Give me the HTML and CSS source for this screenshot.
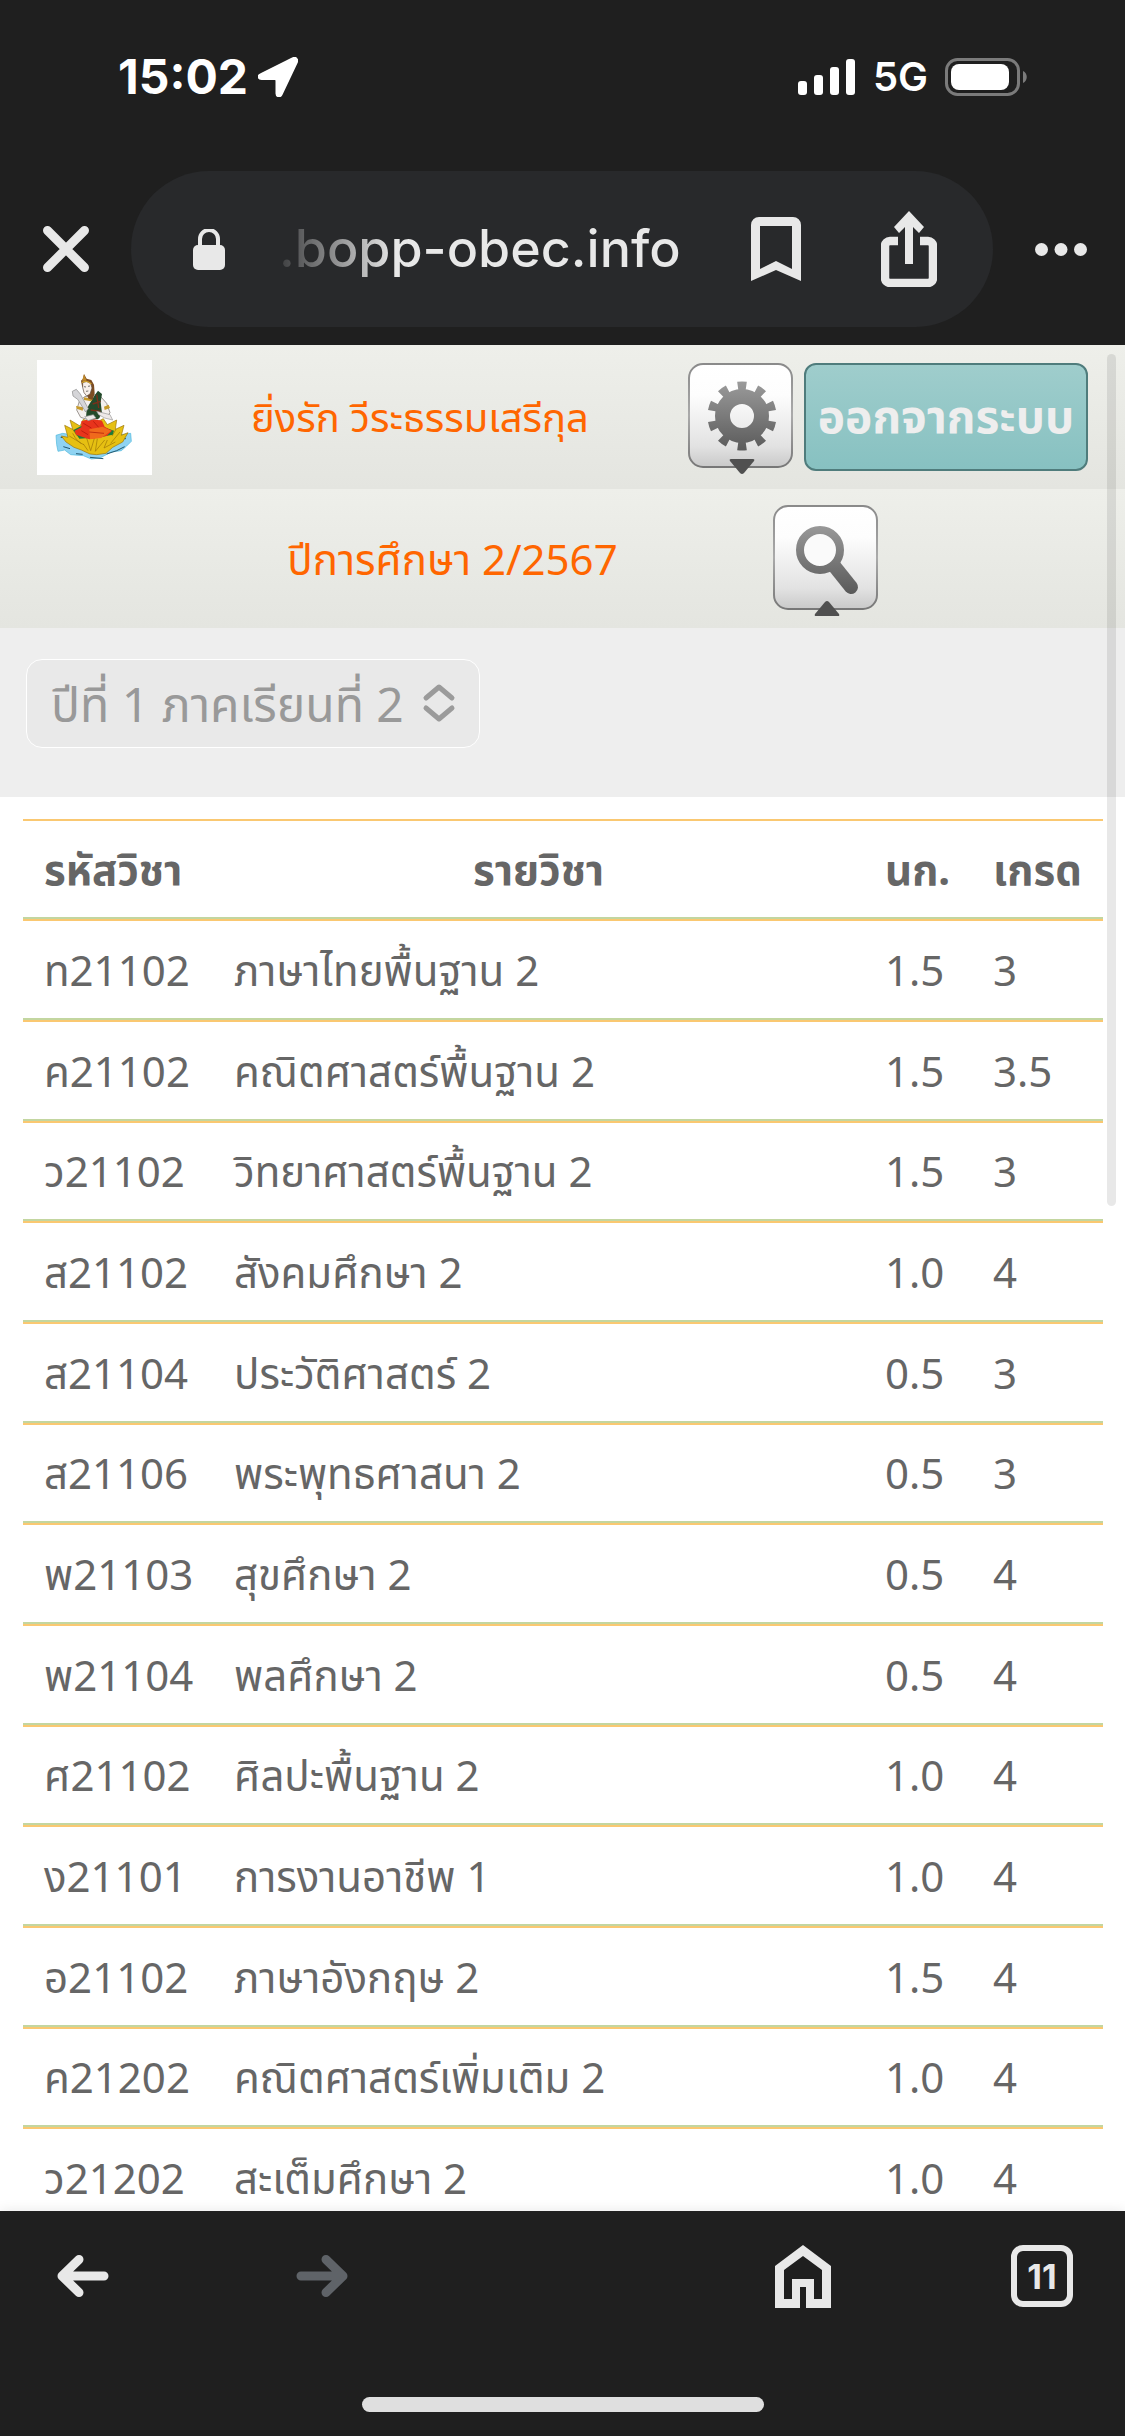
FILE: index.html
```html
<!DOCTYPE html>
<html lang="th">
<head>
    <meta charset="UTF-8">
    <meta name="viewport" content="width=device-width, initial-scale=1.0">
    <title>bopp-obec.info</title>
    <link rel="stylesheet" href="styles.css">
</head>
<body>

    <div class="status-bar">
        <div class="status-group">
            <span class="clock">15:02</span>
            <svg viewBox="0 0 40 40" width="40" height="40"><path d="M2.500 17.500 35 1.200c2.600-1.200 5 1 3.900 3.800L23.500 37.500c-1.400 2.900-5 2.200-5-1V23.500c0-1-.6-1.600-1.600-1.600H3.600c-3.400 0-4-3.100-1.100-4.400z" fill="#fff" stroke="#fff" stroke-width="2"/></svg>
        </div>
        <div class="status-group status-right">
            <svg viewBox="0 0 58 36" width="58" height="36" fill="#fff"><rect x="0" y="22" width="9" height="14" rx="3"/><rect x="16" y="16" width="9" height="20" rx="3"/><rect x="32" y="8" width="9" height="28" rx="3"/><rect x="48" y="0" width="9" height="36" rx="3"/></svg>
            <span class="network">5G</span>
            <svg viewBox="0 0 84 38" width="84" height="38"><rect x="1.500" y="1.500" width="72" height="35" rx="11" fill="none" stroke="#7b7b7b" stroke-width="3"/><rect x="6" y="6" width="58" height="26" rx="8" fill="#fff"/><path d="M78 13c5 2 5 10 0 12z" fill="#7b7b7b"/></svg>
        </div>
    </div>

    <div class="address-bar">
        <button class="icon-btn" aria-label="ปิด">
            <svg viewBox="0 0 46 46" width="46" height="46"><path d="M4.500 4.500l37 37M41.500 4.500l-37 37" stroke="#e8e8e8" stroke-width="9" stroke-linecap="round"/></svg>
        </button>
        <div class="url-box">
            <svg viewBox="0 0 32 41" width="32" height="41"><path d="M7 18v-8a9 9 0 0 1 18 0v8" fill="none" stroke="#e8e8e8" stroke-width="4"/><rect x="0" y="16" width="32" height="25" rx="5" fill="#e8e8e8"/></svg>
            <span class="url">.bopp-obec.info</span>
            <button class="icon-btn" aria-label="บุ๊กมาร์ก">
                <svg viewBox="0 0 50 64" width="50" height="64"><path d="M8 0h34a8 8 0 0 1 8 8v56L25 53 0 64V8a8 8 0 0 1 8-8zm1 9v43l16-8 16 8V9z" fill="#e8e8e8" fill-rule="evenodd"/></svg>
            </button>
            <button class="icon-btn" aria-label="แชร์">
                <svg viewBox="0 0 56 76" width="56" height="76"><path d="M17 30H9a5 5 0 0 0-5 5v32a5 5 0 0 0 5 5h38a5 5 0 0 0 5-5V35a5 5 0 0 0-5-5h-8" fill="none" stroke="#e8e8e8" stroke-width="8.500"/><path d="M28 0l15 16-5 6-6-6v37h-8V16l-6 6-5-6z" fill="#e8e8e8"/></svg>
            </button>
        </div>
        <button class="icon-btn" aria-label="เมนู">
            <svg viewBox="0 0 52 13" width="52" height="13" fill="#e8e8e8"><circle cx="6.500" cy="6.500" r="6.500"/><circle cx="26" cy="6.500" r="6.500"/><circle cx="45.500" cy="6.500" r="6.500"/></svg>
        </button>
    </div>

    <main>
        <div class="bar">
            <svg class="logo" viewBox="21 30 345 345" role="img" aria-label="ตราโรงเรียน">
                <!-- water -->
                <path d="M78 256l20-6 24 4 150 0 30-4 2 24-14 14-16 14-30 4-34 18-26 3-24-10-38-3-18-14-20 4-4-20z" fill="#8fd3f2" stroke="#4db8dc" stroke-width="2"/>
                <path d="M92 262l18 2M100 290l20 6M138 311l20 2M230 312l30-10 24-12M270 266l18 0M180 322l40 4" stroke="#22566e" stroke-width="3" fill="none"/>
                <!-- lotus -->
                <path d="M104 226l24 12-8-28 30 18 10-20 30 14 30-16 12 18 28-14-4 28 26-12-8 30 20-8-16 28-30 16-20 18-28 4-20-2-26-12-22-8-24-16-14-18 20 4z" fill="#e6c012" stroke="#9c7408" stroke-width="2"/>
                <path d="M118 258l36 22M128 250q14 28 34 34M170 264l12 38 12-40M202 266l-6 38 28-34M232 270l-10 24 34-18M160 282l14 20M270 246l-28 34M128 238l14 20M258 238l-12 20" stroke="#9c7408" stroke-width="2" fill="none"/>
                <path d="M130 240l28-14 60 4 34 12-4 12-40 8-60 4z" fill="#1f7a3a"/>
                <!-- seated figure -->
                <path d="M154 214l30-8 32 6 8 18 22 12-16 16-52 10-40-14-4-12 20-10z" fill="#e8341c"/>
                <path d="M178 238l40-8 26 12-30 22-34 4z" fill="#f06a1c"/>
                <path d="M160 220l24 14M190 214l16 18M178 246l44 4M154 242l20 12" stroke="#a81408" stroke-width="2" fill="none"/>
                <path d="M148 154l16-14 30-6 20 8 16 18 10 28-8 12-20-14-4 18-30 6-26-8-12-22z" fill="#f4f0ee" stroke="#6d645e" stroke-width="2"/>
                <path d="M176 166l18-30 10-14 12 10-4 24 4 34-12 18-36-4 2-26z" fill="#244a2b"/>
                <path d="M188 162l24-8M182 180l30 4M200 134l6 40" stroke="#7c2f1a" stroke-width="4"/>
                <path d="M138 168l22 4-2 10-18-6zM222 170l14-6 4 10-16 6zM162 142l26 4-4 8-22-4z" fill="#c79a2a"/>
                <path d="M156 108l-3-16 6-6 3-14 8 14 14 4 8 14 2 26-6 20-12-4z" fill="#7d4d22"/>
                <path d="M156 92l6-19 8 19z" fill="#c08a2c"/>
                <path d="M158 98q12-8 24 2l4 14-6 18-10 6-8-10-4-16z" fill="#f8efe9" stroke="#5c4a3e" stroke-width="2"/>
                <path d="M156 98q14-9 28 4" stroke="#d0a02c" stroke-width="4" fill="none"/>
                <path d="M162 110l6 1M174 109l6-1M168 124l7-1" stroke="#333" stroke-width="2"/>
                <path d="M127 124l12-6 12 14 24 44-8 10-24-38-14-10z" fill="#d5d5d8" stroke="#888" stroke-width="2"/>
                <path d="M164 200l26-6 8 10-24 8zM200 184l40 10 8 16-24-6-18-10z" fill="#eee9e8" stroke="#999" stroke-width="2"/>
            </svg>
            <span class="bar-title bar-name">ยิ่งรัก วีระธรรมเสรีกุล</span>
            <div class="bar-buttons">
                <button class="icon-btn" aria-label="ตั้งค่า">
                    <svg class="plate" viewBox="0 0 105 108" width="105" height="108">
                        <defs>
                            <linearGradient id="plate" x1="0" y1="0" x2="0" y2="1"><stop offset="0" stop-color="#fff"/><stop offset=".3" stop-color="#fdfdfd"/><stop offset=".8" stop-color="#e2e2e2"/><stop offset="1" stop-color="#c9c9c9"/></linearGradient>
                            <linearGradient id="metal" gradientUnits="userSpaceOnUse" x1="0" y1="18" x2="0" y2="90"><stop offset="0" stop-color="#9b9b9b"/><stop offset="1" stop-color="#585858"/></linearGradient>
                            <linearGradient id="edge" x1="0" y1="0" x2="0" y2="1"><stop offset="0" stop-color="#8a8a8a"/><stop offset=".5" stop-color="#aaa"/><stop offset="1" stop-color="#777"/></linearGradient>
                        </defs>
                        <rect x="1" y="1" width="103" height="103" rx="14" fill="url(#plate)" stroke="url(#edge)" stroke-width="2"/>
                        <circle cx="54" cy="53" r="19.500" fill="none" stroke="url(#metal)" stroke-width="15"/>
                        <circle cx="54" cy="53" r="30" fill="none" stroke="url(#metal)" stroke-width="9" pathLength="20" stroke-dasharray="0.900 1.100" stroke-dashoffset="1.450"/>
                        <path d="M43 96h22q2 0 1 2L56 110q-2 2-4 0L42 98q-1-2 1-2z" fill="#505050"/>
                    </svg>
                </button>
                <button class="logout">ออกจากระบบ</button>
            </div>
        </div>

        <div class="bar bar-year">
            <span class="bar-title">ปีการศึกษา 2/2567</span>
            <button class="icon-btn" aria-label="ค้นหา">
                <svg class="plate" viewBox="0 0 105 108" width="105" height="108">
                    <rect x="1" y="1" width="103" height="103" rx="14" fill="url(#plate)" stroke="url(#edge)" stroke-width="2"/>
                    <path d="M62 62l16 20" stroke="url(#metal)" stroke-width="14" stroke-linecap="round"/>
                    <circle cx="47" cy="45" r="20" fill="#fafafa" stroke="url(#metal)" stroke-width="8"/>
                    <path d="M43 111h22q2 0 1-2L56 97q-2-2-4 0L42 109q-1 2 1 2z" fill="#505050"/>
                </svg>
            </button>
        </div>

        <div class="filter">
            <div class="select-wrap">
                <select class="term" aria-label="ภาคเรียน" disabled>
                    <option>ปีที่ 1 ภาคเรียนที่ 2</option>
                </select>
                <svg class="chevrons" viewBox="0 0 34 40" width="34" height="40"><path d="M4 15L17 4l13 11M4 25l13 11 13-11" fill="none" stroke="#9b9b9b" stroke-width="5" stroke-linecap="round" stroke-linejoin="round"/></svg>
            </div>
        </div>

        <div class="grades-wrap">
            <table class="grades">
                <thead>
                    <tr><th class="col-code">รหัสวิชา</th><th class="col-name">รายวิชา</th><th class="col-credit">นก.</th><th class="col-grade">เกรด</th></tr>
                </thead>
                <tbody>
                    <tr><td>ท21102</td><td>ภาษาไทยพื้นฐาน 2</td><td>1.5</td><td>3</td></tr>
                    <tr><td>ค21102</td><td>คณิตศาสตร์พื้นฐาน 2</td><td>1.5</td><td>3.5</td></tr>
                    <tr><td>ว21102</td><td>วิทยาศาสตร์พื้นฐาน 2</td><td>1.5</td><td>3</td></tr>
                    <tr><td>ส21102</td><td>สังคมศึกษา 2</td><td>1.0</td><td>4</td></tr>
                    <tr><td>ส21104</td><td>ประวัติศาสตร์ 2</td><td>0.5</td><td>3</td></tr>
                    <tr><td>ส21106</td><td>พระพุทธศาสนา 2</td><td>0.5</td><td>3</td></tr>
                    <tr><td>พ21103</td><td>สุขศึกษา 2</td><td>0.5</td><td>4</td></tr>
                    <tr><td>พ21104</td><td>พลศึกษา 2</td><td>0.5</td><td>4</td></tr>
                    <tr><td>ศ21102</td><td>ศิลปะพื้นฐาน 2</td><td>1.0</td><td>4</td></tr>
                    <tr><td>ง21101</td><td>การงานอาชีพ 1</td><td>1.0</td><td>4</td></tr>
                    <tr><td>อ21102</td><td>ภาษาอังกฤษ 2</td><td>1.5</td><td>4</td></tr>
                    <tr><td>ค21202</td><td>คณิตศาสตร์เพิ่มเติม 2</td><td>1.0</td><td>4</td></tr>
                    <tr><td>ว21202</td><td>สะเต็มศึกษา 2</td><td>1.0</td><td>4</td></tr>
                </tbody>
            </table>
        </div>
        <div class="scroll-thumb"></div>
    </main>

    <div class="toolbar">
        <div class="toolbar-row">
            <div class="toolbar-group">
                <button class="icon-btn tool" aria-label="ย้อนกลับ">
                    <svg viewBox="0 0 52 42" width="52" height="42"><path d="M22 4.500L5 21l17 16.500M5 21h42" fill="none" stroke="#e8e8e8" stroke-width="9" stroke-linecap="round" stroke-linejoin="round"/></svg>
                </button>
                <button class="icon-btn tool" aria-label="ไปข้างหน้า">
                    <svg viewBox="0 0 52 42" width="52" height="42"><path d="M30 4.500L47 21 30 37.500M47 21H5" fill="none" stroke="#5f6368" stroke-width="9" stroke-linecap="round" stroke-linejoin="round"/></svg>
                </button>
            </div>
            <div class="toolbar-group">
                <button class="icon-btn tool" aria-label="หน้าแรก">
                    <svg viewBox="0 0 56 63" width="56" height="63"><path d="M28 0l28 21v42H31V42h-6v21H0V21zm0 11L9 25v29h8V34h22v20h8V25z" fill="#e8e8e8" fill-rule="evenodd"/></svg>
                </button>
                <button class="icon-btn tool tabs">11</button>
            </div>
        </div>
        <div class="home-indicator"></div>
    </div>

</body>
</html>
```
FILE: styles.css
```css
* {
    box-sizing: border-box;
}
body {
    margin: 0;
    height: 100vh;
    display: flex;
    flex-direction: column;
    background-color: #1f1f1f;
    font-family: "Noto Sans", "Noto Sans Thai", Tahoma, sans-serif;
    font-size: 42px;
    line-height: 60px;
    color: #666;
}
svg {
    display: block;
}
.icon-btn {
    display: flex;
    align-items: center;
    justify-content: center;
    padding: 0;
    border: none;
    background: none;
}

/* Phone status bar */
.status-bar {
    display: flex;
    justify-content: space-between;
    align-items: center;
    height: 171px;
    padding: 0 96px 18px 118px;
    font-family: Inter, sans-serif;
    color: #fff;
}
.status-group {
    display: flex;
    align-items: center;
    gap: 10px;
}
.status-right {
    gap: 17px;
}
.clock {
    font-size: 48px;
    font-weight: 700;
}
.network {
    font-size: 40px;
    font-weight: 600;
}

/* Address bar */
.address-bar {
    display: flex;
    align-items: center;
    gap: 42px;
    height: 174px;
    padding: 0 38px 18px 43px;
}
.url-box {
    flex: 1;
    display: flex;
    align-items: center;
    height: 156px;
    padding: 0 56px 0 62px;
    border-radius: 78px;
    background-color: #28292b;
}
.url {
    flex: 1;
    padding: 0 0 0 54px;
    font-family: Inter, sans-serif;
    font-size: 52px;
    font-weight: 500;
    color: transparent;
    background: linear-gradient(to right, #28292b 40px, #e8e8e8 170px);
    background-clip: text;
    -webkit-background-clip: text;
    white-space: nowrap;
}
.url-box .icon-btn + .icon-btn {
    margin-left: 80px;
}

/* Page */
main {
    position: relative;
    flex: 1;
    min-height: 0;
    overflow: hidden;
    background-color: #fff;
}
.bar {
    display: flex;
    align-items: center;
    height: 144px;
    padding: 0 37px;
    background: linear-gradient(#eeefea, #e4e5e0);
}
.bar-year {
    height: 139px;
    padding: 0 247px 0 132px;
}
.logo {
    width: 115px;
    height: 115px;
    background-color: #fff;
}
.bar-title {
    flex: 1;
    text-align: center;
    color: #ff6600;
}
.bar-name {
    font-size: 40px;
}
.bar-buttons {
    display: flex;
    align-items: center;
    gap: 11px;
}
/* the arrow hangs below the plate */
.plate {
    overflow: visible;
}
.logout {
    width: 284px;
    height: 108px;
    padding: 4px 0 0;
    border: 2px solid #4f7c7c;
    border-radius: 12px;
    background: linear-gradient(#9fcdcc, #87c1c1);
    font-family: inherit;
    font-size: 46px;
    font-weight: bold;
    color: #eee;
    white-space: nowrap;
}
.filter {
    display: flex;
    height: 169px;
    padding: 31px 26px;
    background-color: #eee;
}
.select-wrap {
    position: relative;
}
.term {
    width: 454px;
    height: 89px;
    padding: 0 24px;
    appearance: none;
    border: 1px solid #fff;
    border-radius: 16px;
    background-color: #e9e9e9;
    font-family: inherit;
    font-size: 48px;
    color: #999;
    opacity: 1;
}
.chevrons {
    position: absolute;
    top: 24px;
    right: 24px;
}
.grades-wrap {
    padding: 22px 22px 0 23px;
}
.grades {
    width: 100%;
    table-layout: fixed;
    border-collapse: separate;
    border-spacing: 0;
}
.grades th,
.grades td {
    height: 101px;
    padding: 0 0 0 21px;
    border-top: 2px solid #fac871;
    border-bottom: 2px solid #c3d6a0;
    text-align: left;
    white-space: nowrap;
}
.grades th {
    height: 100px;
}
.grades tr:nth-child(3n) td {
    height: 100px;
}
.grades .col-code {
    width: 190px;
}
.grades .col-name {
    padding-right: 21px;
    text-align: center;
}
.grades .col-credit {
    width: 108px;
}
.grades .col-grade {
    width: 131px;
}
.scroll-thumb {
    position: absolute;
    top: 9px;
    right: 9px;
    width: 9px;
    height: 852px;
    border-radius: 5px;
    background-color: rgba(0, 0, 0, 0.09);
}

/* Browser toolbar */
.toolbar {
    display: flex;
    flex-direction: column;
    align-items: center;
    justify-content: space-between;
    height: 225px;
    padding: 34px 52px 24px;
    box-shadow: 0 0 12px rgba(0, 0, 0, 0.1);
    z-index: 1;
    background-color: #1f1f1f;
}
.toolbar-row {
    align-self: stretch;
    display: flex;
    justify-content: space-between;
}
.toolbar-group {
    display: flex;
    gap: 177px;
}
.tool {
    width: 62px;
    height: 62px;
}
.tabs {
    border: 6px solid #e8e8e8;
    border-radius: 12px;
    font-family: Inter, sans-serif;
    font-size: 34px;
    font-weight: 700;
    color: #e8e8e8;
}
.home-indicator {
    width: 402px;
    height: 15px;
    border-radius: 8px;
    background-color: #dfdfdf;
}
```
